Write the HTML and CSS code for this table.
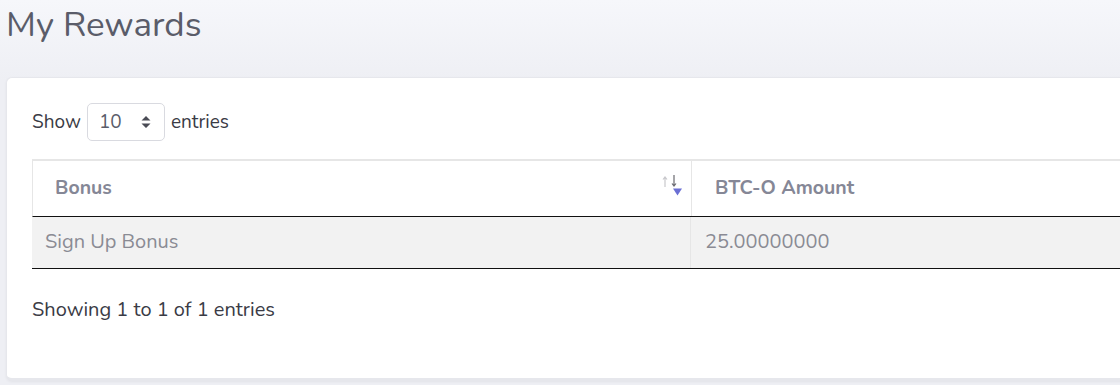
FILE: index.html
```html
<!DOCTYPE html>
<html>
<head>
<meta charset="utf-8">
<title>My Rewards</title>
<link rel="stylesheet" href="styles.css">
</head>
<body>

<div class="page">
<h1 class="p_title">My Rewards</h1>

<div class="card">
<div class="dt_len">
<span>Show</span>
<div class="dt_sel"><span>10</span>
<svg width="10" height="14" viewBox="0 0 10 14"><path d="M5 1 L9.5 5.5 H0.5 Z M5 13 L9.5 8.5 H0.5 Z" fill="#4a4b55"/></svg>
</div>
<span>entries</span>
</div>

<div class="dt_tbl">
<div class="dt_row dt_head">
<div class="dt_cell">Bonus
<svg class="dt_sort" width="24" height="26" viewBox="0 0 24 26"><path d="M4 4 V14 M2 6.5 L4 4 L6 6.5" stroke="#c8c8cc" stroke-width="1.2" fill="none"/><path d="M13 2 V13 M11 10.5 L13 13 L15 10.5" stroke="#6a6a70" stroke-width="1.2" fill="none"/><path d="M12 15.5 H21 L16.5 22.5 Z" fill="#6b6fd4"/></svg>
</div>
<div class="dt_cell">BTC-O Amount</div>
</div>
<div class="dt_row dt_body">
<div class="dt_cell">Sign Up Bonus</div>
<div class="dt_cell">25.00000000</div>
</div>
</div>

<div class="dt_info">Showing 1 to 1 of 1 entries</div>
</div>
</div>

</body>
</html>
```

FILE: styles.css
```css
html, body {margin:0;padding:0;overflow:hidden;}
body {font-family:"Nunito","Open Sans","Liberation Sans",sans-serif;background:linear-gradient(#f6f7fb, #eeeff4 80px, #eeeff4);height:385px;}

.page {padding:0 0 0 6px;width:1500px;}
.p_title {margin:0;padding:5px 0 0 0;height:72px;font-size:35px;font-weight:400;line-height:40px;color:#5a5c69;}

.card {background:#fff;border-radius:6px;border:1px solid #e6e7ec;box-shadow:0 1px 3px rgba(0,0,0,0.05);height:304px;padding:25px 25px 0 25px;box-sizing:border-box;border-bottom:3px solid #e6e7ec;}

.dt_len {display:flex;align-items:center;gap:6px;font-size:19px;color:#3a3b45;height:38px;}
.dt_sel {display:flex;align-items:center;justify-content:space-between;width:78px;height:38px;box-sizing:border-box;border:1px solid #d9dae0;border-radius:5px;padding:0 13px 0 11px;color:#5a5c69;}

.dt_tbl {margin-top:18px;width:1320px;border-top:2px solid #e6e6e6;}
.dt_row {display:grid;grid-template-columns:659px 1fr;}
.dt_cell {border-right:1px solid #e6e6e6;position:relative;}
.dt_head {height:55px;border-bottom:1px solid #111;border-left:1px solid #e6e6e6;}
.dt_head .dt_cell {padding-left:23px;font-weight:700;color:#858796;font-size:19.5px;line-height:54px;}
.dt_head .dt_cell:first-child {padding-left:22px;}
.dt_body {height:51px;background:#f2f2f2;border-bottom:1px solid #111;}
.dt_body .dt_cell {padding-left:13px;color:#8a8b94;font-size:20px;line-height:50px;}
.dt_body .dt_cell:last-child {padding-left:14px;}
.dt_sort {position:absolute;right:6px;top:12px;}

.dt_info {margin-top:27px;font-size:20px;color:#3a3b45;}
```
